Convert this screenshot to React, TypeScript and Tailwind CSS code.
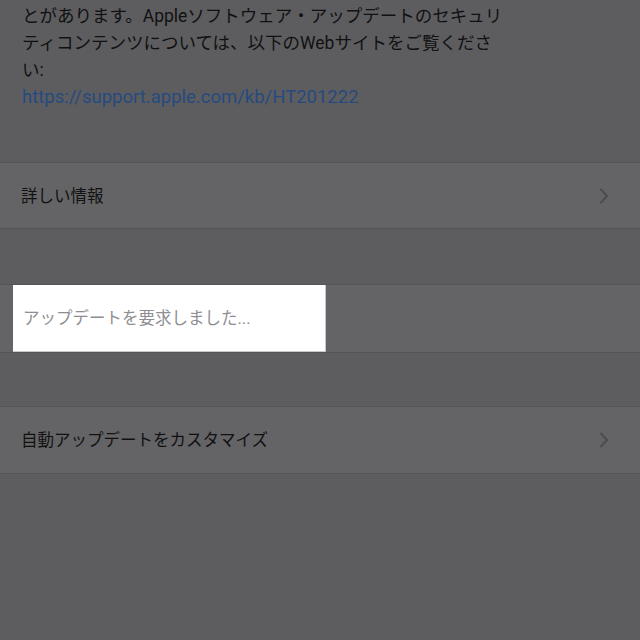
import React from "react";

const font = { fontFamily: 'Roboto, "Noto Sans CJK JP", sans-serif' };

function Chevron() {
  return (
    <svg width="10" height="16" viewBox="0 0 10 16" className="shrink-0">
      <path d="M2 1.5 L8 8 L2 14.5" fill="none" stroke="#4c4c4e" strokeWidth="2" strokeLinecap="round" strokeLinejoin="round" />
    </svg>
  );
}

export default function App() {
  return (
    <div className="w-[640px] h-[640px] overflow-hidden bg-[#5d5d5f] text-[#111112]" style={font}>
      <div className="pl-[22px] pr-[10px] pt-[3px] h-[162px] text-[17.5px] leading-[27px]">
        <div className="whitespace-nowrap">とがあります。Appleソフトウェア・アップデートのセキュリ</div>
        <div className="whitespace-nowrap">ティコンテンツについては、以下のWebサイトをご覧くださ</div>
        <div className="whitespace-nowrap">い:</div>
        <div className="whitespace-nowrap text-[#264a80] text-[18.5px]">https://support.apple.com/kb/HT201222</div>
      </div>
      <div className="border-y border-[#555557] bg-[#646466] h-[67px] flex items-center pl-[21px] pr-[31px] justify-between">
        <span className="text-[16.5px] pt-[3px]">詳しい情報</span>
        <Chevron />
      </div>
      <div className="h-[55px]" />
      <div className="border-y border-[#555557] bg-[#646466] h-[69px] flex items-center pl-[13px]">
        <div className="bg-white w-[313px] h-[67px] flex items-center pl-[10px] border-r border-b border-[#c8c8cc]">
          <span className="text-[16.5px] pt-[2px] text-[#8e8e92]">アップデートを要求しました...</span>
        </div>
      </div>
      <div className="h-[53px]" />
      <div className="border-y border-[#555557] bg-[#646466] h-[68px] flex items-center pl-[21px] pr-[31px] justify-between">
        <span className="text-[16.5px] pt-[2px]">自動アップデートをカスタマイズ</span>
        <Chevron />
      </div>
    </div>
  );
}
